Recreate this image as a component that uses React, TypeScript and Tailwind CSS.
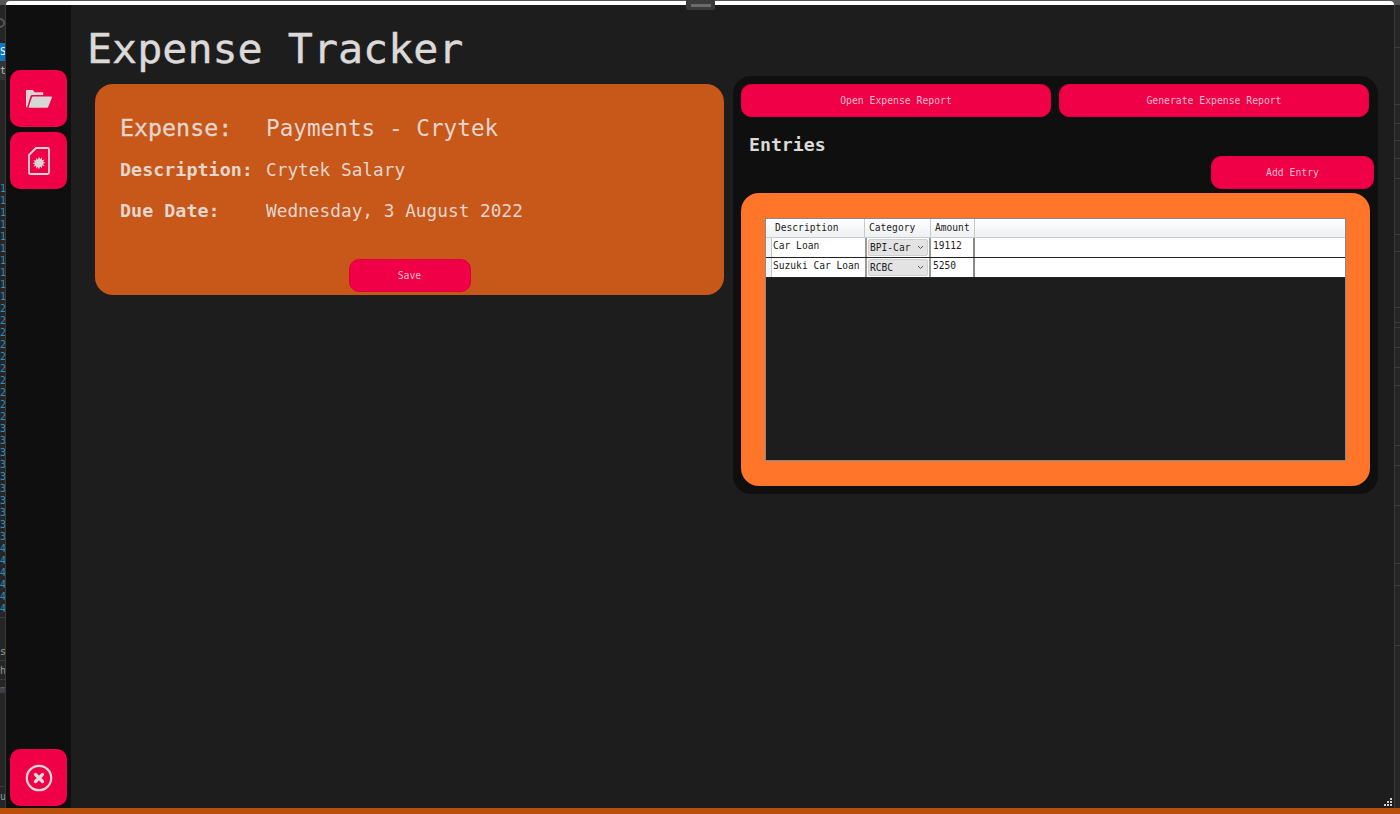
// App.tsx
const mono = "font-['DejaVu_Sans_Mono','Liberation_Mono',monospace]";

function PinkButton({ label, className }: { label: string; className: string }) {
  return (
    <button className={`bg-[#f00046] text-[#f5bccd] text-[9.750px] pt-[1px] flex items-center justify-center border border-[#e0003f] ${className}`}>
      {label}
    </button>
  );
}

function SideButton({ children, className = "" }: { children: React.ReactNode; className?: string }) {
  return (
    <button className={`bg-[#f00046] size-[57px] rounded-[10px] flex items-center justify-center shrink-0 ${className}`}>
      {children}
    </button>
  );
}

function FolderIcon() {
  return (
    <svg width="26" height="18" viewBox="0 0 26 18" fill="#d9d6d6">
      <path d="M0 1.2C0 .5.5 0 1.2 0h5.6l2 2.2h7.4c.6 0 1 .4 1 1V5H6.2c-.8 0-1.4.4-1.7 1.200L1 17.500c-.6-.2-1-.6-1-1.200z" />
      <path d="M7 6.500h18c.7 0 1.100.6.900 1.200l-3.600 9c-.2.6-.7 1-1.300 1H2.400l3.500-10.400c.2-.5.600-.8 1.100-.8z" />
    </svg>
  );
}

function ReportIcon() {
  return (
    <svg width="22" height="28" viewBox="0 0 22 28" fill="none">
      <path d="M8 1h11.500c.8 0 1.500.7 1.500 1.500v23c0 .8-.7 1.500-1.500 1.500h-17C1.700 27 1 26.300 1 25.500V8z" stroke="#d9d6d6" strokeWidth="1.800" strokeLinejoin="round" />
      <path
        d="M11 9.500l1.100 2.700 2-1.900-.2 2.800 2.800-.4-1.800 2.100 2.600 1-2.600 1 1.800 2.100-2.800-.4.2 2.800-2-1.900L11 22.500l-1.100-2.600-2 1.900.2-2.800-2.800.4 1.800-2.100-2.600-1 2.600-1-1.800-2.100 2.800.4-.2-2.800 2 1.900z"
        fill="#d9d6d6"
      />
    </svg>
  );
}

function CloseIcon() {
  return (
    <svg width="28" height="28" viewBox="0 0 28 28" fill="none" stroke="#dcd9d9">
      <circle cx="14" cy="14" r="12.200" strokeWidth="2.200" />
      <path d="M10.500 10.500l7 7M17.500 10.500l-7 7" strokeWidth="3.200" strokeLinecap="round" />
    </svg>
  );
}

function DetailRow({ label, value, big }: { label: string; value: string; big?: boolean }) {
  return (
    <div className={`flex items-center ${big ? "h-[30px]" : "h-[24px]"}`}>
      <span className={`w-[146px] shrink-0 ${big ? "text-[23.300px] [-webkit-text-stroke:0.3px]" : "text-[18.400px] font-bold"}`}>{label}</span>
      <span className={big ? "text-[22.700px]" : "text-[17.800px]"}>{value}</span>
    </div>
  );
}

function CategorySelect({ value }: { value: string }) {
  return (
    <div className="w-[66px] shrink-0 border-x-2 border-[#9a9a9a] px-[1px] py-[1px]">
      <div className="h-full bg-[#e3e3e3] border border-[#cfcfcf] rounded-[2px] flex items-center justify-between pl-[1px] pr-[3px] text-[#222]">
        <span>{value}</span>
        <svg width="7" height="5" viewBox="0 0 7 5" fill="none" stroke="#555">
          <path d="M1 1l2.500 2.500L6 1" />
        </svg>
      </div>
    </div>
  );
}

function EntryRow({ description, category, amount }: { description: string; category: string; amount: string }) {
  return (
    <div className="h-[20px] flex bg-white border-b border-[#222] text-[9.600px] text-[#222] leading-[14px]">
      <div className="w-[6px] shrink-0 bg-[#f1f3f4] border-r border-[#c6c6c6]" />
      <div className="w-[93px] shrink-0 pl-[1px] pt-[1px] whitespace-nowrap overflow-hidden">{description}</div>
      <CategorySelect value={category} />
      <div className="w-[44px] shrink-0 border-r-2 border-[#8a8a8a] pl-[2px] pt-[1px]">{amount}</div>
    </div>
  );
}

const gutterNumbers = Array.from({ length: 36 }, (_, i) => i);
// row heights of the panel list behind the window, right edge
const backRows = [43, 57, 19, 17, 18, 20, 56, 17, 56, 15, 5, 20, 20, 18, 60, 20, 40, 58, 22, 60];

export default function App() {
  return (
    <div className={`relative w-[1400px] h-[814px] overflow-hidden flex flex-col bg-[#252526] ${mono}`}>
      {/* Strip of the window behind */}
      <div className="h-[5px] shrink-0 bg-[#555] pl-[6px] pr-[6px]">
        <div className="h-[5px] mt-[1px] bg-white rounded-t-[4px] border-b border-[#8a8a8a]" />
      </div>

      <div className="flex-1 min-h-0 flex">
        {/* Editor gutter peeking out on the left */}
        <div className="w-[6px] shrink-0 bg-[#252526] flex flex-col overflow-hidden border-r border-[#3a3a3a] text-[10px] leading-[12px] text-[#2f8fbf]">
          <div className="h-[13px]" />
          <div className="h-[10px] w-[10px] -ml-[5px] rounded-full border-2 border-[#555]" />
          <div className="h-[15px]" />
          <div className="h-[18px] bg-[#0a78c4] text-white leading-[18px] whitespace-nowrap">S</div>
          <div className="h-[19px] text-[#bbb] leading-[19px] bg-[#333]">t</div>
          <div className="h-[103px]" />
          {gutterNumbers.map((n) => (
            <div key={n} className="h-[12px] shrink-0">
              {n < 10 ? "1" : n < 20 ? "2" : n < 30 ? "3" : "4"}
            </div>
          ))}
          <div className="flex-1 border-t border-[#3a3a3a] mt-[2px] text-[#999] leading-[19px]">
            <div className="h-[24px]" />
            <div className="h-[19px] border-b border-[#3a3a3a]">s</div>
            <div className="h-[19px] border-b border-[#3a3a3a]">h</div>
            <div className="h-[19px] text-[#666]">m</div>
            <div className="h-[87px]" />
            <div className="h-[19px] border-t border-[#3a3a3a]">u</div>
          </div>
        </div>

        {/* App window */}
        <div className="w-[1388px] shrink-0 flex bg-[#1e1d1e]">
          {/* Sidebar */}
          <aside className="w-[65px] shrink-0 bg-[#0f0f0f] pl-[4px] pt-[65px] pb-[2px] flex flex-col gap-[5px]">
            <SideButton>
              <FolderIcon />
            </SideButton>
            <SideButton>
              <ReportIcon />
            </SideButton>
            <SideButton className="mt-auto">
              <CloseIcon />
            </SideButton>
          </aside>

          <main className="flex-1 min-w-0 flex flex-col">
            <h1 className="text-[41.700px] leading-[50px] font-normal text-[#dcd9d9] [-webkit-text-stroke:0.4px] pl-[16px] pt-[19px] h-[71px] shrink-0 whitespace-nowrap">
              Expense Tracker
            </h1>

            <div className="flex items-start">
              {/* Expense details */}
              <section className="mt-[8px] ml-[24px] w-[629px] h-[211px] shrink-0 rounded-[18px] bg-[#c8571a] text-[#e3d6cd] pl-[25px] pt-[29px] flex flex-col">
                <DetailRow big label="Expense:" value="Payments - Crytek" />
                <div className="h-[15px]" />
                <DetailRow label="Description:" value="Crytek Salary" />
                <div className="h-[17px]" />
                <DetailRow label="Due Date:" value="Wednesday, 3 August 2022" />
                <div className="flex-1 flex items-end justify-center pr-[25px] pb-[3px]">
                  <PinkButton label="Save" className="w-[122px] h-[33px] rounded-[10px]" />
                </div>
              </section>

              {/* Entries panel */}
              <section className="ml-[9px] w-[645px] h-[418px] shrink-0 rounded-[18px] bg-[#0f0f0f] pt-[8px] pl-[8px]">
                <div className="flex gap-[8px]">
                  <PinkButton label="Open Expense Report" className="w-[310px] h-[33px] rounded-[10px]" />
                  <PinkButton label="Generate Expense Report" className="w-[310px] h-[33px] rounded-[10px]" />
                </div>
                <h2 className="text-[18.200px] leading-[24px] font-bold text-[#dcd9d9] pl-[8px] mt-[16px]">Entries</h2>
                <div className="flex justify-end pr-[4px] -mt-[1px]">
                  <PinkButton label="Add Entry" className="w-[163px] h-[33px] rounded-[10px]" />
                </div>
                <div className="mt-[4px] w-[629px] h-[293px] rounded-[18px] bg-[#ff752a] pt-[25px] pl-[24px]">
                  <div className="w-[581px] h-[243px] bg-[#1e1d1e] border border-[#7f8d99]">
                    <div className="h-[19px] flex text-[9.600px] text-[#222] leading-[18px] bg-gradient-to-b from-white to-[#eef0f1] border-b border-[#c9ccce]">
                      <div className="w-[99px] shrink-0 pl-[9px] border-r border-[#c9c9c9]">Description</div>
                      <div className="w-[66px] shrink-0 pl-[4px] border-r border-[#c9c9c9]">Category</div>
                      <div className="w-[44px] shrink-0 pl-[4px] border-r border-[#c9c9c9]">Amount</div>
                    </div>
                    <EntryRow description="Car Loan" category="BPI-Car" amount="19112" />
                    <EntryRow description="Suzuki Car Loan" category="RCBC" amount="5250" />
                  </div>
                </div>
              </section>
            </div>
          </main>
        </div>

        {/* Edge of the window behind on the right */}
        <div className="w-[6px] shrink-0 bg-[#252526] border-l border-[#3a3a3a] flex flex-col overflow-hidden">
          {backRows.map((h, i) => (
            <div key={i} className="shrink-0 border-b border-[#3c3c3c]" style={{ height: h }} />
          ))}
        </div>
      </div>

      <div className="h-[6px] shrink-0 bg-[#b84f0c]" />

      {/* Drag handle over the top edge */}
      <div className="absolute left-[686px] top-0 w-[29px] h-[10px] bg-[#3a3a3a] rounded-b-[2px] flex items-center justify-center">
        <div className="w-[20px] h-[3px] bg-[#6a6a6a]" />
      </div>

      {/* Resize grip */}
      <svg className="absolute left-[1382px] top-[798px]" width="11" height="10" viewBox="0 0 11 10" fill="#cfcfcf">
        <rect x="8" y="0" width="2" height="2" />
        <rect x="5" y="3" width="2" height="2" />
        <rect x="8" y="3" width="2" height="2" />
        <rect x="2" y="6" width="2" height="2" />
        <rect x="5" y="6" width="2" height="2" />
        <rect x="8" y="6" width="2" height="2" />
      </svg>
    </div>
  );
}
